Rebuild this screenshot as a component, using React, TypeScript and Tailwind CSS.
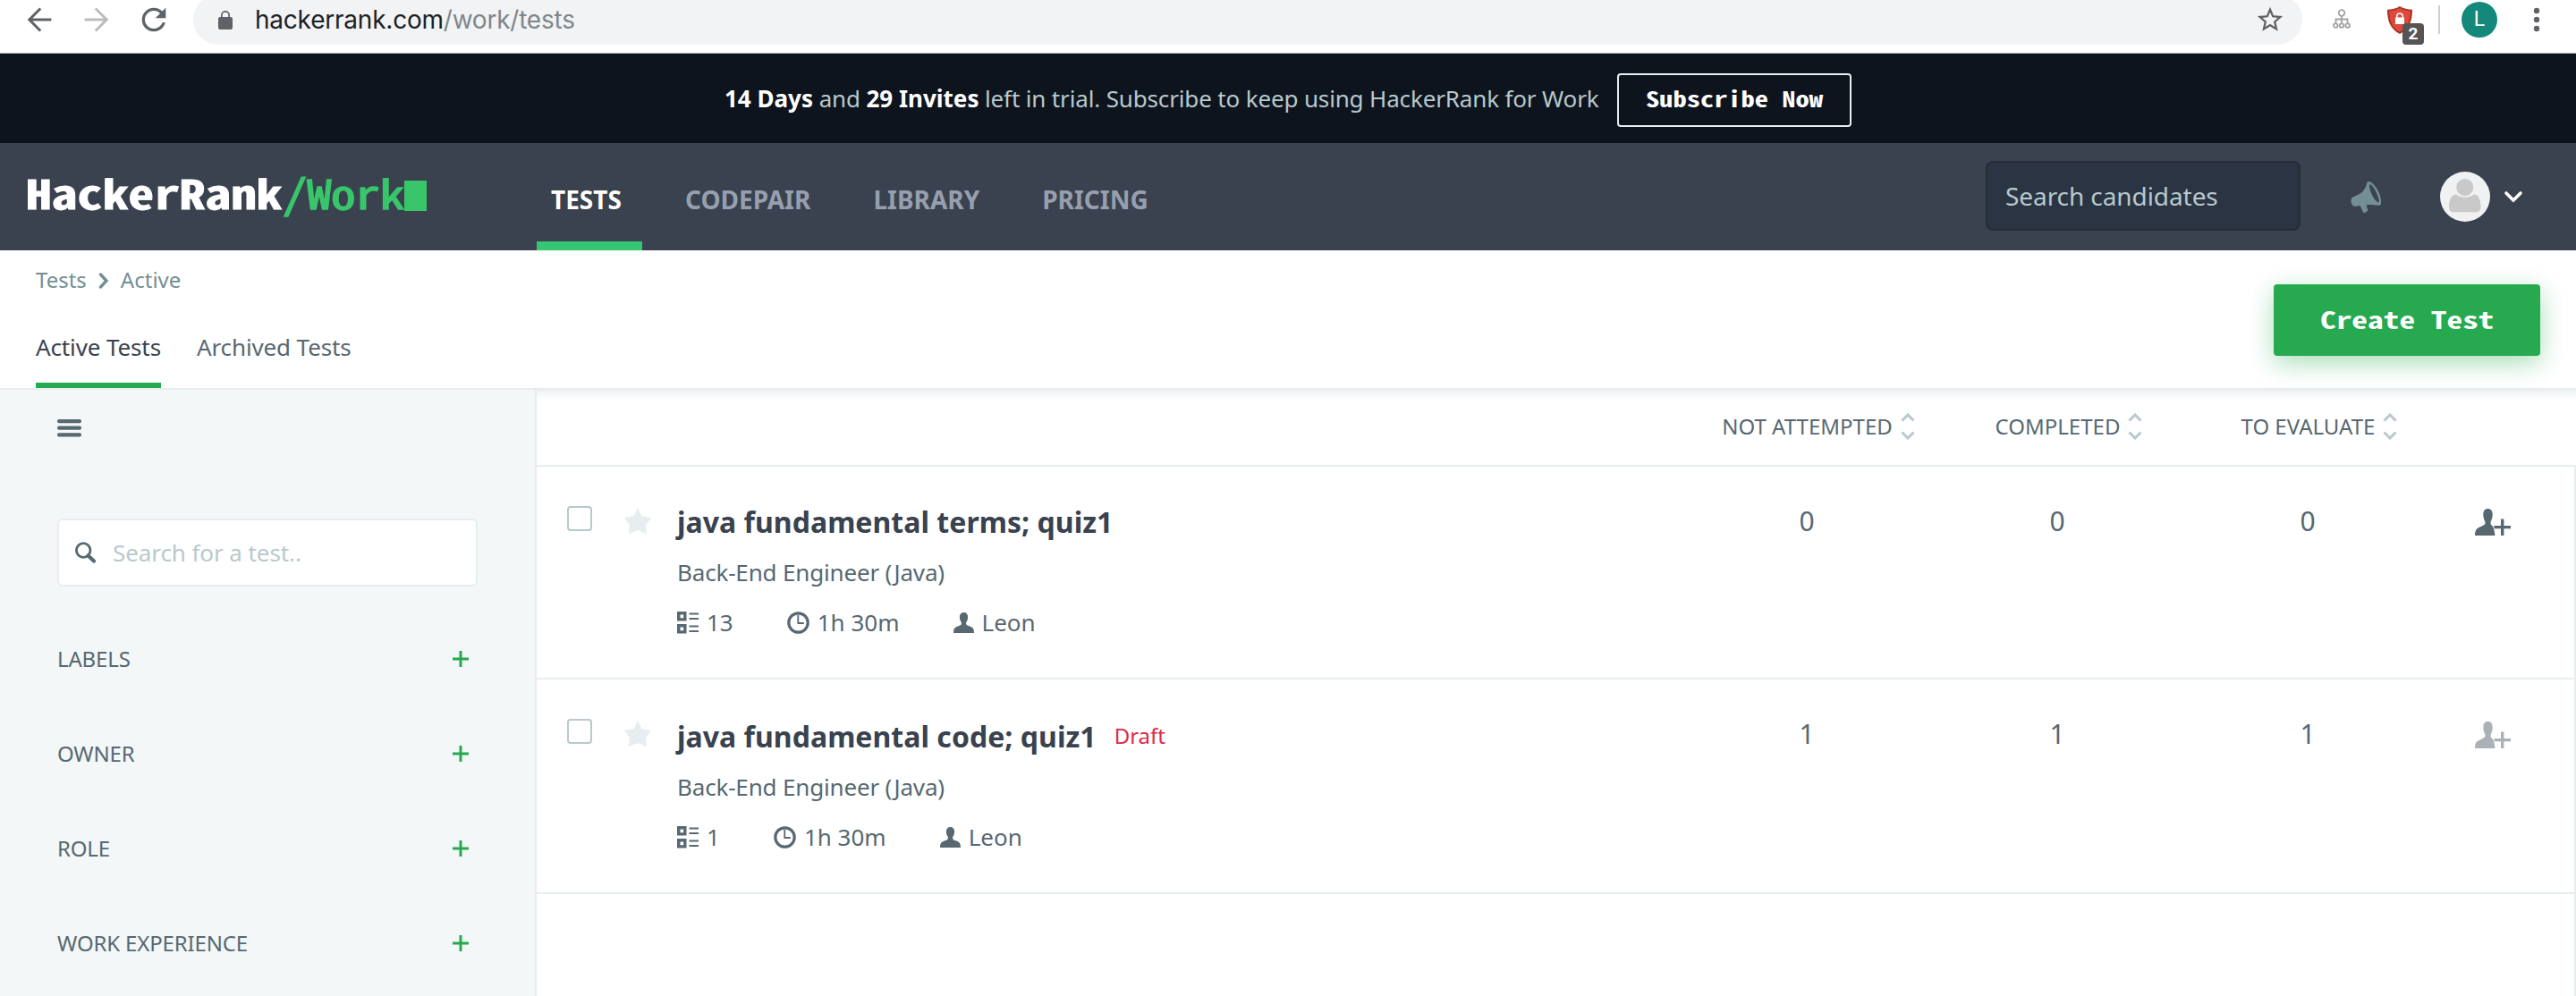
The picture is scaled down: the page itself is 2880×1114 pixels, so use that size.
import React from "react";

const sans = "font-['Noto_Sans','Open_Sans',sans-serif]";
const mono = "font-['Noto_Sans_Mono_CJK_SC','DejaVu_Sans_Mono',monospace]";

function Svg(p: { w: number; h: number; vb: string; className?: string; children: React.ReactNode }) {
  return (
    <svg width={p.w} height={p.h} viewBox={p.vb} fill="currentColor" className={"block shrink-0 " + (p.className ?? "")}>
      {p.children}
    </svg>
  );
}

function BrowserBar() {
  return (
    <div className="flex h-[60px] items-start border-b border-[#b3b3b3] bg-white text-[#5f6368]">
      <Svg w={40} h={40} vb="0 0 24 24" className="ml-6 mt-0.5">
        <path d="M20 11.1H7.4l6-6L12.1 3.900l-8.100 8.100 8.100 8.100 1.300-1.200-6-6H20z" />
      </Svg>
      <Svg w={40} h={40} vb="0 0 24 24" className="ml-6 mt-0.5 text-[#babcbe]">
        <path d="M4 11.100h12.600l-6-6 1.300-1.200 8.100 8.100-8.100 8.100-1.300-1.200 6-6H4z" />
      </Svg>
      <Svg w={40} h={40} vb="0 0 24 24" className="ml-6 mt-0.5">
        <path d="M17.65 6.35C16.2 4.9 14.21 4 12 4c-4.42 0-7.99 3.58-7.99 8s3.57 8 7.99 8c3.73 0 6.84-2.55 7.73-6h-2.08c-.82 2.33-3.04 4-5.65 4-3.31 0-6-2.69-6-6s2.69-6 6-6c1.66 0 3.14.69 4.22 1.78L13 11h7V4l-2.35 2.35z" />
      </Svg>
      <div className="-mt-1.5 ml-6 flex h-14 w-[2358px] items-center rounded-full bg-[#f1f3f4]">
        <Svg w={16} h={21} vb="0 0 16 21" className="ml-7">
          <path d="M14 7h-1V5A5 5 0 0 0 3 5v2H2a2 2 0 0 0-2 2v10c0 1.100.9 2 2 2h12a2 2 0 0 0 2-2V9a2 2 0 0 0-2-2zM4.700 7V5a3.300 3.300 0 0 1 6.600 0v2z" />
        </Svg>
        <span className="ml-[25px] font-[Inter,sans-serif] text-[28px] leading-9 tracking-[-0.22px] text-[#202124]">
          hackerrank.com<span className="text-[#80868b]">/work/tests</span>
        </span>
        <Svg w={34} h={34} vb="0 0 24 24" className="ml-auto mr-[19px]">
          <path d="M22 9.240l-7.190-.62L12 2 9.190 8.630 2 9.240l5.460 4.730L5.820 21 12 17.270 18.180 21l-1.630-7.030L22 9.240zM12 15.400l-3.760 2.270 1-4.280-3.320-2.880 4.380-.38L12 6.100l1.710 4.040 4.380.38-3.320 2.880 1 4.280L12 15.400z" />
        </Svg>
      </div>
      <Svg w={20} h={22} vb="0 0 20 22" className="ml-[34px] mt-2.5 text-[#a3a3a3]">
        <g fill="none" stroke="currentColor" strokeWidth="1.800">
          <circle cx="10" cy="4.500" r="3.300" />
          <path d="M10 8v8M3.500 16v-4.500h13V16" />
          <circle cx="3.300" cy="18.600" r="2.300" />
          <circle cx="10" cy="18.600" r="2.300" />
          <circle cx="16.700" cy="18.600" r="2.300" />
        </g>
      </Svg>
      <div className="relative ml-[41px] mt-[7px] h-[43px] w-[41px]">
        <Svg w={28} h={31} vb="0 0 28 31">
          <path fill="#b23024" d="M14 0c4 2.500 9 3.800 14 3.800 0 12-3 21.500-14 27.200C3 25.300 0 15.800 0 3.800 5 3.800 10 2.500 14 0z" />
          <path fill="#dc4a3d" d="M14 2c3.500 2 7.500 3.200 11.800 3.400C25.500 15.500 23 23.800 14 28.800 5 23.800 2.500 15.500 2.200 5.400 6.500 5.200 10.500 4 14 2z" />
          <path fill="#fff" d="M9 12.500h1v-1.200a4 4 0 0 1 8 0v1.200h1v7.500H9zm2.500 0h5v-1.200a2.500 2.500 0 0 0-5 0z" />
        </Svg>
        <span className="absolute left-[17px] top-[19px] flex h-6 w-6 items-center justify-center rounded bg-[#555] font-[Roboto,sans-serif] text-[19px] font-bold text-white">2</span>
      </div>
      <div className="ml-4 mt-1.5 h-8 w-0.5 bg-[#cfcfcf]" />
      <div className="ml-6 mt-0.5 flex h-10 w-10 items-center justify-center rounded-full bg-[#13897b] font-[Roboto,sans-serif] text-[23px] text-white">L</div>
      <Svg w={8} h={28} vb="0 0 8 28" className="ml-10 mt-2">
        <circle cx="4" cy="4" r="3.200" />
        <circle cx="4" cy="14" r="3.200" />
        <circle cx="4" cy="24" r="3.200" />
      </Svg>
    </div>
  );
}

function TrialBar() {
  return (
    <div className="flex h-[100px] bg-[#0e141e] pl-[810px]">
      <p className="mt-[30px] w-[998px] whitespace-nowrap text-[26px] leading-10 tracking-[-0.15px] text-[#b7c9cc]">
        <b className="font-bold tracking-normal text-white">14 Days</b> and <b className="font-bold tracking-normal text-white">29 Invites</b> left in trial. Subscribe to keep using HackerRank for Work
      </p>
      <button className={"mt-[22px] flex h-[60px] w-[262px] items-center justify-center rounded border-2 border-[#e7eeef] pb-1 text-[24px] font-bold leading-10 text-white " + mono}>
        <span className="inline-block scale-x-[1.27] whitespace-nowrap">Subscribe Now</span>
      </button>
    </div>
  );
}

function NavBar() {
  return (
    <header className="flex h-[120px] bg-[#39424e]">
      <div className={"flex w-[600px] items-start pl-[29px] pt-[25px] text-[45px] leading-[60px] " + mono}>
        <span className="w-[287px]">
          <span className="inline-block origin-left scale-x-[1.273] font-bold text-white [-webkit-text-stroke:0.8px_#fff]">HackerRank</span>
        </span>
        <span className="w-[136px]">
          <span className="inline-block origin-left scale-x-[1.208] text-[#39c66b] [-webkit-text-stroke:1.6px_#39c66b]">/Work</span>
        </span>
        <span className="mt-[17px] h-[34px] w-[25px] bg-[#39c66b]" />
      </div>
      <nav className="flex text-[28px] font-bold leading-10 text-[#979faf]">
        <a className="w-[118px] border-b-[10px] border-[#36c572] pl-4 pt-[43px] text-white">TESTS</a>
        <a className="ml-12 pt-[43px]">CODEPAIR</a>
        <a className="ml-[70px] pt-[43px]">LIBRARY</a>
        <a className="ml-[70px] pt-[43px]">PRICING</a>
      </nav>
      <div className="ml-auto mt-5 flex h-[78px] w-[352px] items-center rounded-lg border-2 border-[#252c35] bg-[#2b3442] pl-5 text-[28px] leading-10 tracking-[-0.08px] text-[#b7c9cc]">
        Search candidates
      </div>
      <Svg w={36} h={37} vb="0 0 36 37" className="ml-14 mt-[42px] text-[#738f93]">
        <path fillRule="evenodd" d="M19.500 1.200C22 .2 27 4.500 30.500 11c4 7.500 4.500 15.500 2.500 16.600-1.500.8-6.500-1.200-13-.5l-2.500.5 2 6.200-4.800 2.700-4.200-8.500-4.500.8C3 29.200.800 26.500.500 23.500c-.3-2.300.5-4.300 2.500-5.200l6.500-3C15 12.500 17.500 6 18 3.500c.2-1.300.7-2 1.500-2.300zM21.500 4.500c-1.200 1 0 6.500 3 12.500 2.800 5.300 6 8 7 7.300 1-.8-.3-6-3-11.500-2.800-5.300-5.800-9.200-7-8.300z" />
      </Svg>
      <Svg w={56} h={56} vb="0 0 56 56" className="ml-16 mt-8">
        <circle cx="28" cy="28" r="28" fill="#eff1f3" />
        <path fill="#c9c9c9" d="M10 39c0-8 3-13.500 8-13.500 3 2.300 6.300 3.300 10 3.300s7-1 10-3.300c5 0 7.500 5.500 7.500 13.500 0 4-2 6.300-5.500 6.300H15.500c-3.500 0-5.500-2.300-5.500-6.300z" />
        <circle cx="27.700" cy="17.500" r="10" fill="#c9c9c9" stroke="#eff1f3" />
      </Svg>
      <Svg w={22} h={14} vb="0 0 22 14" className="ml-[15px] mr-[59px] mt-[53px] text-white">
        <path d="M3 3l8 8 8-8" fill="none" stroke="currentColor" strokeWidth="3.600" strokeLinecap="round" />
      </Svg>
    </header>
  );
}

function SubHeader() {
  return (
    <div className="relative flex h-[156px] justify-between border-b-2 border-[#e6eeef] bg-white pl-10 pr-10">
      <div>
        <div className="flex pt-[15px] text-[24px] leading-9 text-[#738f93]">
          Tests
          <Svg w={12} h={18} vb="0 0 12 18" className="ml-[13px] mr-[13px] mt-2.5">
            <path d="M2.500 2l6.500 7-6.500 7" fill="none" stroke="currentColor" strokeWidth="3.400" strokeLinecap="round" />
          </Svg>
          Active
        </div>
        <div className="mt-[39px] flex gap-10 text-[26px] leading-9 tracking-[-0.12px] text-[#576871]">
          <div className="h-16 border-b-[6px] border-[#27a950] text-[#39424e]">Active Tests</div>
          <div>Archived Tests</div>
        </div>
      </div>
      <button className={"mt-[38px] flex h-20 w-[298px] items-center justify-center rounded bg-[#27a950] pb-[3px] text-[27px] font-bold leading-10 text-white shadow-[0_8px_28px_rgba(39,169,80,0.4)] " + mono}>
        <span className="inline-block scale-x-[1.31] whitespace-nowrap">Create Test</span>
      </button>
    </div>
  );
}

function Sidebar() {
  return (
    <aside className="w-[600px] border-r-2 border-[#e6ecef] bg-[#f3f7f8] pl-16 pr-16 text-[#576871]">
      <Svg w={27} h={20} vb="0 0 27 20" className="mt-[33px]">
        <rect width="27" height="4.200" rx="2" />
        <rect y="7.600" width="27" height="4.200" rx="2" />
        <rect y="15.300" width="27" height="4.200" rx="2" />
      </Svg>
      <div className="mt-[91px] flex h-[76px] items-center rounded-md border-2 border-[#e6eeef] bg-white text-[26px] leading-9 tracking-[-0.08px] text-[#b7c9cc]">
        <Svg w={24} h={24} vb="0 0 24 24" className="ml-[18px] mr-[18px] text-[#576871]">
          <path d="M14.500 15.500l6.500 6" fill="none" stroke="currentColor" strokeWidth="4.200" strokeLinecap="round" />
          <circle cx="9.200" cy="9.500" r="7.800" fill="none" stroke="currentColor" strokeWidth="2.800" />
        </Svg>
        Search for a test..
      </div>
      <div className="mt-[63px] flex flex-col gap-[70px] text-[24px] leading-9 tracking-[-0.15px]">
        {["LABELS", "OWNER", "ROLE", "WORK EXPERIENCE"].map((s) => (
          <div key={s} className="flex items-center justify-between pr-2.5">
            {s}
            <Svg w={18} h={18} vb="0 0 18 18" className="text-[#27a950]">
              <path d="M7.500 0h3v7.500H18v3h-7.500V18h-3v-7.500H0v-3h7.500z" />
            </Svg>
          </div>
        ))}
      </div>
    </aside>
  );
}

function TestRow({ title, draft, count }: { title: string; draft?: boolean; count: string }) {
  const n = draft ? "1" : "0";
  return (
    <div className="flex border-b-2 border-[#e6eeef] pb-11 pl-[34px] text-[#576871]">
      <div className="mt-11 h-7 w-7 rounded border-2 border-[#b7c9cc]" />
      <Svg w={30} h={29} vb="0 0 30 29" className="ml-9 mt-[46px] text-[#e6eeef]">
        <path d="M15 0l4.600 9.300L30 11l-6 8.200 1.200 9.800L15 25.200 4.800 29 6 19.200 0 11l10.400-1.700z" />
      </Svg>
      <div className={"ml-[29px] w-[1123px] " + (draft ? "pt-[42px]" : "pt-10")}>
        <div className="flex items-center leading-[44px]">
          <span className="text-[32px] font-bold tracking-[0.03px] text-[#39424e]">{title}</span>
          {draft && <span className="-mt-0.5 ml-5 text-[24px] text-[#dc2a49]">Draft</span>}
        </div>
        <div className="mt-4 text-[26px] leading-9 tracking-[-0.17px]">Back-End Engineer (Java)</div>
        <div className="mt-5 flex items-center text-[26px] leading-9">
          <Svg w={24} h={25} vb="0 0 24 25">
            <path fillRule="evenodd" d="M0 0h10.500v10.500H0zM3.500 3.500v3.800h3.700V3.500zM0 14h10.500v10.500H0zM3.500 17.500v3.800h3.700v-3.800zM13.500 1.500H24v2H13.500zM13.500 7H24v2H13.500zM13.500 15.500H24v2H13.500zM13.500 21H24v2H13.500z" />
          </Svg>
          <span className="ml-[9px]">{count}</span>
          <Svg w={25} h={25} vb="0 0 25 25" className="ml-[60px]">
            <circle cx="12.500" cy="12.500" r="10.700" fill="none" stroke="currentColor" strokeWidth="3.200" />
            <path d="M12.300 4v9h6.500" fill="none" stroke="currentColor" strokeWidth="1.800" />
          </Svg>
          <span className="ml-[9px]">1h 30m</span>
          <Svg w={23} h={23} vb="0 0 23 23" className="ml-[60px]">
            <path d="M11.500 0c3 0 4.600 2 4.600 5 0 2.500-.6 4-1.600 5.600-.8 1.400-.6 3.200 1 3.800l4 1.700c2.500 1 3.500 3 3.500 6.900H0c0-3.900 1-5.900 3.500-6.900l4-1.700c1.600-.6 1.800-2.400 1-3.800C7.500 9 6.900 7.500 6.900 5c0-3 1.600-5 4.600-5z" />
          </Svg>
          <span className="ml-[9px]">Leon</span>
        </div>
      </div>
      <div className="grid grid-cols-[280px_280px_280px] pt-[41px] text-center text-[30px] leading-10">
        <span>{n}</span>
        <span>{n}</span>
        <span>{n}</span>
      </div>
      <Svg w={40} h={30} vb="0 0 40 30" className={"ml-[47px] mt-[47px] " + (draft ? "opacity-50" : "")}>
        <path d="M14.500 0c3.500 0 5.200 2.500 5.200 6.500 0 3-.7 5-1.700 7.200-1 2-.4 4.300 1.200 5.300 1.800 1.500 2.800 6 3.300 11H0c0-5.500 1.500-7.500 4.500-9l5-2.500c2-1 2.500-3 1.500-4.800C10 11.500 9.300 9.500 9.300 6.500c0-4 1.700-6.500 5.200-6.500z" />
        <path d="M29 11.500h3.400v7.400H40v3.400h-7.600V30H29v-7.700h-7.600v-3.400H29z" />
      </Svg>
    </div>
  );
}

function ColumnHead({ label }: { label: string }) {
  return (
    <div className="flex items-center justify-center whitespace-nowrap pl-[26px]">
      {label}
      <Svg w={16} h={30} vb="0 0 16 30" className="ml-[9px] text-[#b7c9cc]">
        <path d="M1.500 8.500L8 2l6.500 6.500M1.500 21.500L8 28l6.500-6.500" fill="none" stroke="currentColor" strokeWidth="3" />
      </Svg>
    </div>
  );
}

export default function App() {
  return (
    <div className={"flex h-[1114px] w-[2880px] flex-col overflow-hidden bg-white " + sans}>
      <BrowserBar />
      <TrialBar />
      <NavBar />
      <SubHeader />
      <div className="flex flex-1">
        <Sidebar />
        <main className="flex flex-1 flex-col">
          <div className="grid h-[86px] grid-cols-[280px_280px_280px] border-b-2 border-[#e6eeef] pb-[3px] pl-[1280px] text-[24px] text-[#576871] shadow-[inset_0_10px_10px_-6px_#e6eeef]">
            <ColumnHead label="NOT ATTEMPTED" />
            <ColumnHead label="COMPLETED" />
            <ColumnHead label="TO EVALUATE" />
          </div>
          <div className="flex-1 border-r-2 border-[#e6eeef]">
            <TestRow title="java fundamental terms; quiz1" count="13" />
            <TestRow title="java fundamental code; quiz1" draft count="1" />
          </div>
        </main>
      </div>
    </div>
  );
}
